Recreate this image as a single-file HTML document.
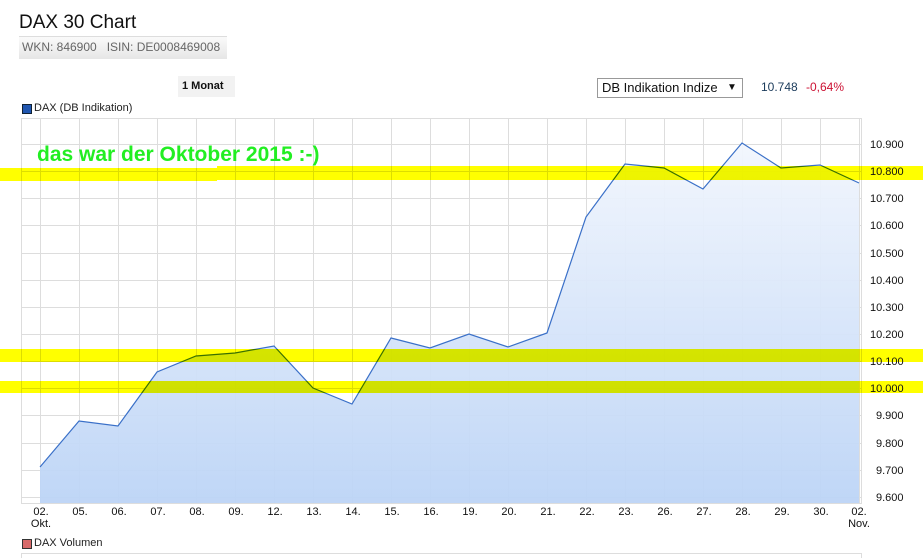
<!DOCTYPE html>
<html><head><meta charset="utf-8"><style>
body{margin:0;width:923px;height:558px;overflow:hidden;background:#fff;font-family:"Liberation Sans",Arial,sans-serif;position:relative}
.a{position:absolute}
</style></head><body>
<div class="a" style="left:19px;top:12px;font-size:19px;color:#111">DAX 30 Chart</div>
<div class="a" style="left:19px;top:36px;width:208px;height:22px;border-top:1px solid #ddd;background:linear-gradient(#fafafa,#e6e6e6)"></div>
<div class="a" style="left:22px;top:40px;font-size:12px;color:#666">WKN: 846900&nbsp;&nbsp;&nbsp;ISIN: DE0008469008</div>
<div class="a" style="left:178px;top:76px;width:57px;height:21px;background:#f2f2f2"></div>
<div class="a" style="left:182px;top:80px;font-size:11px;font-weight:bold;color:#111">1 Monat</div>
<div class="a" style="left:597px;top:78px;width:144px;height:18px;border:1px solid #999;background:#fff"></div>
<div class="a" style="left:602px;top:80px;font-size:13px;color:#111">DB Indikation Indize</div>
<div class="a" style="left:727px;top:82px;font-size:10px;color:#111">▼</div>
<div class="a" style="left:761px;top:80px;font-size:12px;color:#1a3a5a">10.748</div>
<div class="a" style="left:806px;top:80px;font-size:12px;color:#cc1133">-0,64%</div>
<div class="a" style="left:22px;top:104px;width:8px;height:8px;background:#2056b0;border:1px solid #123"></div>
<div class="a" style="left:34px;top:102px;font-size:11px;color:#222">DAX (DB Indikation)</div>
<svg class="a" style="left:0;top:0" width="923" height="558">
<defs><linearGradient id="g" x1="0" y1="0" x2="0" y2="1"><stop offset="0" stop-color="#f2f6fd"/><stop offset="1" stop-color="#bcd4f6"/></linearGradient></defs>
<rect x="21.5" y="118.5" width="840" height="385" fill="none" stroke="#ddd"/>
<g stroke="#ddd" stroke-width="1">
<line x1="40.5" y1="118" x2="40.5" y2="503"/><line x1="79.5" y1="118" x2="79.5" y2="503"/><line x1="118.5" y1="118" x2="118.5" y2="503"/><line x1="157.5" y1="118" x2="157.5" y2="503"/><line x1="196.5" y1="118" x2="196.5" y2="503"/><line x1="235.5" y1="118" x2="235.5" y2="503"/><line x1="274.5" y1="118" x2="274.5" y2="503"/><line x1="313.5" y1="118" x2="313.5" y2="503"/><line x1="352.5" y1="118" x2="352.5" y2="503"/><line x1="391.5" y1="118" x2="391.5" y2="503"/><line x1="430.5" y1="118" x2="430.5" y2="503"/><line x1="469.5" y1="118" x2="469.5" y2="503"/><line x1="508.5" y1="118" x2="508.5" y2="503"/><line x1="547.5" y1="118" x2="547.5" y2="503"/><line x1="586.5" y1="118" x2="586.5" y2="503"/><line x1="625.5" y1="118" x2="625.5" y2="503"/><line x1="664.5" y1="118" x2="664.5" y2="503"/><line x1="703.5" y1="118" x2="703.5" y2="503"/><line x1="742.5" y1="118" x2="742.5" y2="503"/><line x1="781.5" y1="118" x2="781.5" y2="503"/><line x1="820.5" y1="118" x2="820.5" y2="503"/><line x1="859.5" y1="118" x2="859.5" y2="503"/>
<line x1="21" y1="144.5" x2="862" y2="144.5"/><line x1="21" y1="171.5" x2="862" y2="171.5"/><line x1="21" y1="198.5" x2="862" y2="198.5"/><line x1="21" y1="225.5" x2="862" y2="225.5"/><line x1="21" y1="253.5" x2="862" y2="253.5"/><line x1="21" y1="280.5" x2="862" y2="280.5"/><line x1="21" y1="307.5" x2="862" y2="307.5"/><line x1="21" y1="334.5" x2="862" y2="334.5"/><line x1="21" y1="361.5" x2="862" y2="361.5"/><line x1="21" y1="388.5" x2="862" y2="388.5"/><line x1="21" y1="415.5" x2="862" y2="415.5"/><line x1="21" y1="443.5" x2="862" y2="443.5"/><line x1="21" y1="470.5" x2="862" y2="470.5"/><line x1="21" y1="497.5" x2="862" y2="497.5"/>
</g>
<polygon fill="url(#g)" opacity="0.95" points="40,467 79,421 118,426 157,372 196,356 235,353 274,346 313,388 352,404 391,338 430,348 469,334 508,347 547,333 586,217 625,164 664,168 703,189 742,143 781,168 820,165 859,183 859,503 40,503"/>
<polyline fill="none" stroke="#3a70c8" stroke-width="1.2" points="40,467 79,421 118,426 157,372 196,356 235,353 274,346 313,388 352,404 391,338 430,348 469,334 508,347 547,333 586,217 625,164 664,168 703,189 742,143 781,168 820,165 859,183"/>
<g style="mix-blend-mode:multiply" fill="#ffff00">
<rect x="0" y="168" width="217" height="13"/><rect x="217" y="166" width="706" height="14"/>
<rect x="0" y="349" width="923" height="13"/><rect x="0" y="381" width="923" height="12"/>
</g>
<g font-size="11" fill="#111" font-family="Liberation Sans,Arial,sans-serif">
<text x="870" y="148">10.900</text><text x="870" y="175">10.800</text><text x="870" y="202">10.700</text><text x="870" y="229">10.600</text><text x="870" y="257">10.500</text><text x="870" y="284">10.400</text><text x="870" y="311">10.300</text><text x="870" y="338">10.200</text><text x="870" y="365">10.100</text><text x="870" y="392">10.000</text><text x="876" y="419">9.900</text><text x="876" y="447">9.800</text><text x="876" y="474">9.700</text><text x="876" y="501">9.600</text>
<g text-anchor="middle">
<text x="41" y="515">02.</text><text x="41" y="527">Okt.</text><text x="80" y="515">05.</text><text x="119" y="515">06.</text><text x="158" y="515">07.</text><text x="197" y="515">08.</text><text x="236" y="515">09.</text><text x="275" y="515">12.</text><text x="314" y="515">13.</text><text x="353" y="515">14.</text><text x="392" y="515">15.</text><text x="431" y="515">16.</text><text x="470" y="515">19.</text><text x="509" y="515">20.</text><text x="548" y="515">21.</text><text x="587" y="515">22.</text><text x="626" y="515">23.</text><text x="665" y="515">26.</text><text x="704" y="515">27.</text><text x="743" y="515">28.</text><text x="782" y="515">29.</text><text x="821" y="515">30.</text><text x="859" y="515">02.</text><text x="859" y="527">Nov.</text>
</g></g>
<text x="37" y="161" font-size="21" font-weight="bold" fill="#22ee22" font-family="Liberation Sans,Arial,sans-serif">das war der Oktober 2015 :-)</text>
<rect x="21.5" y="553.5" width="840" height="10" fill="none" stroke="#ddd"/>
</svg>
<div class="a" style="left:22px;top:539px;width:8px;height:8px;background:#d86a6a;border:1px solid #333"></div>
<div class="a" style="left:34px;top:537px;font-size:11px;color:#222">DAX Volumen</div>
</body></html>
